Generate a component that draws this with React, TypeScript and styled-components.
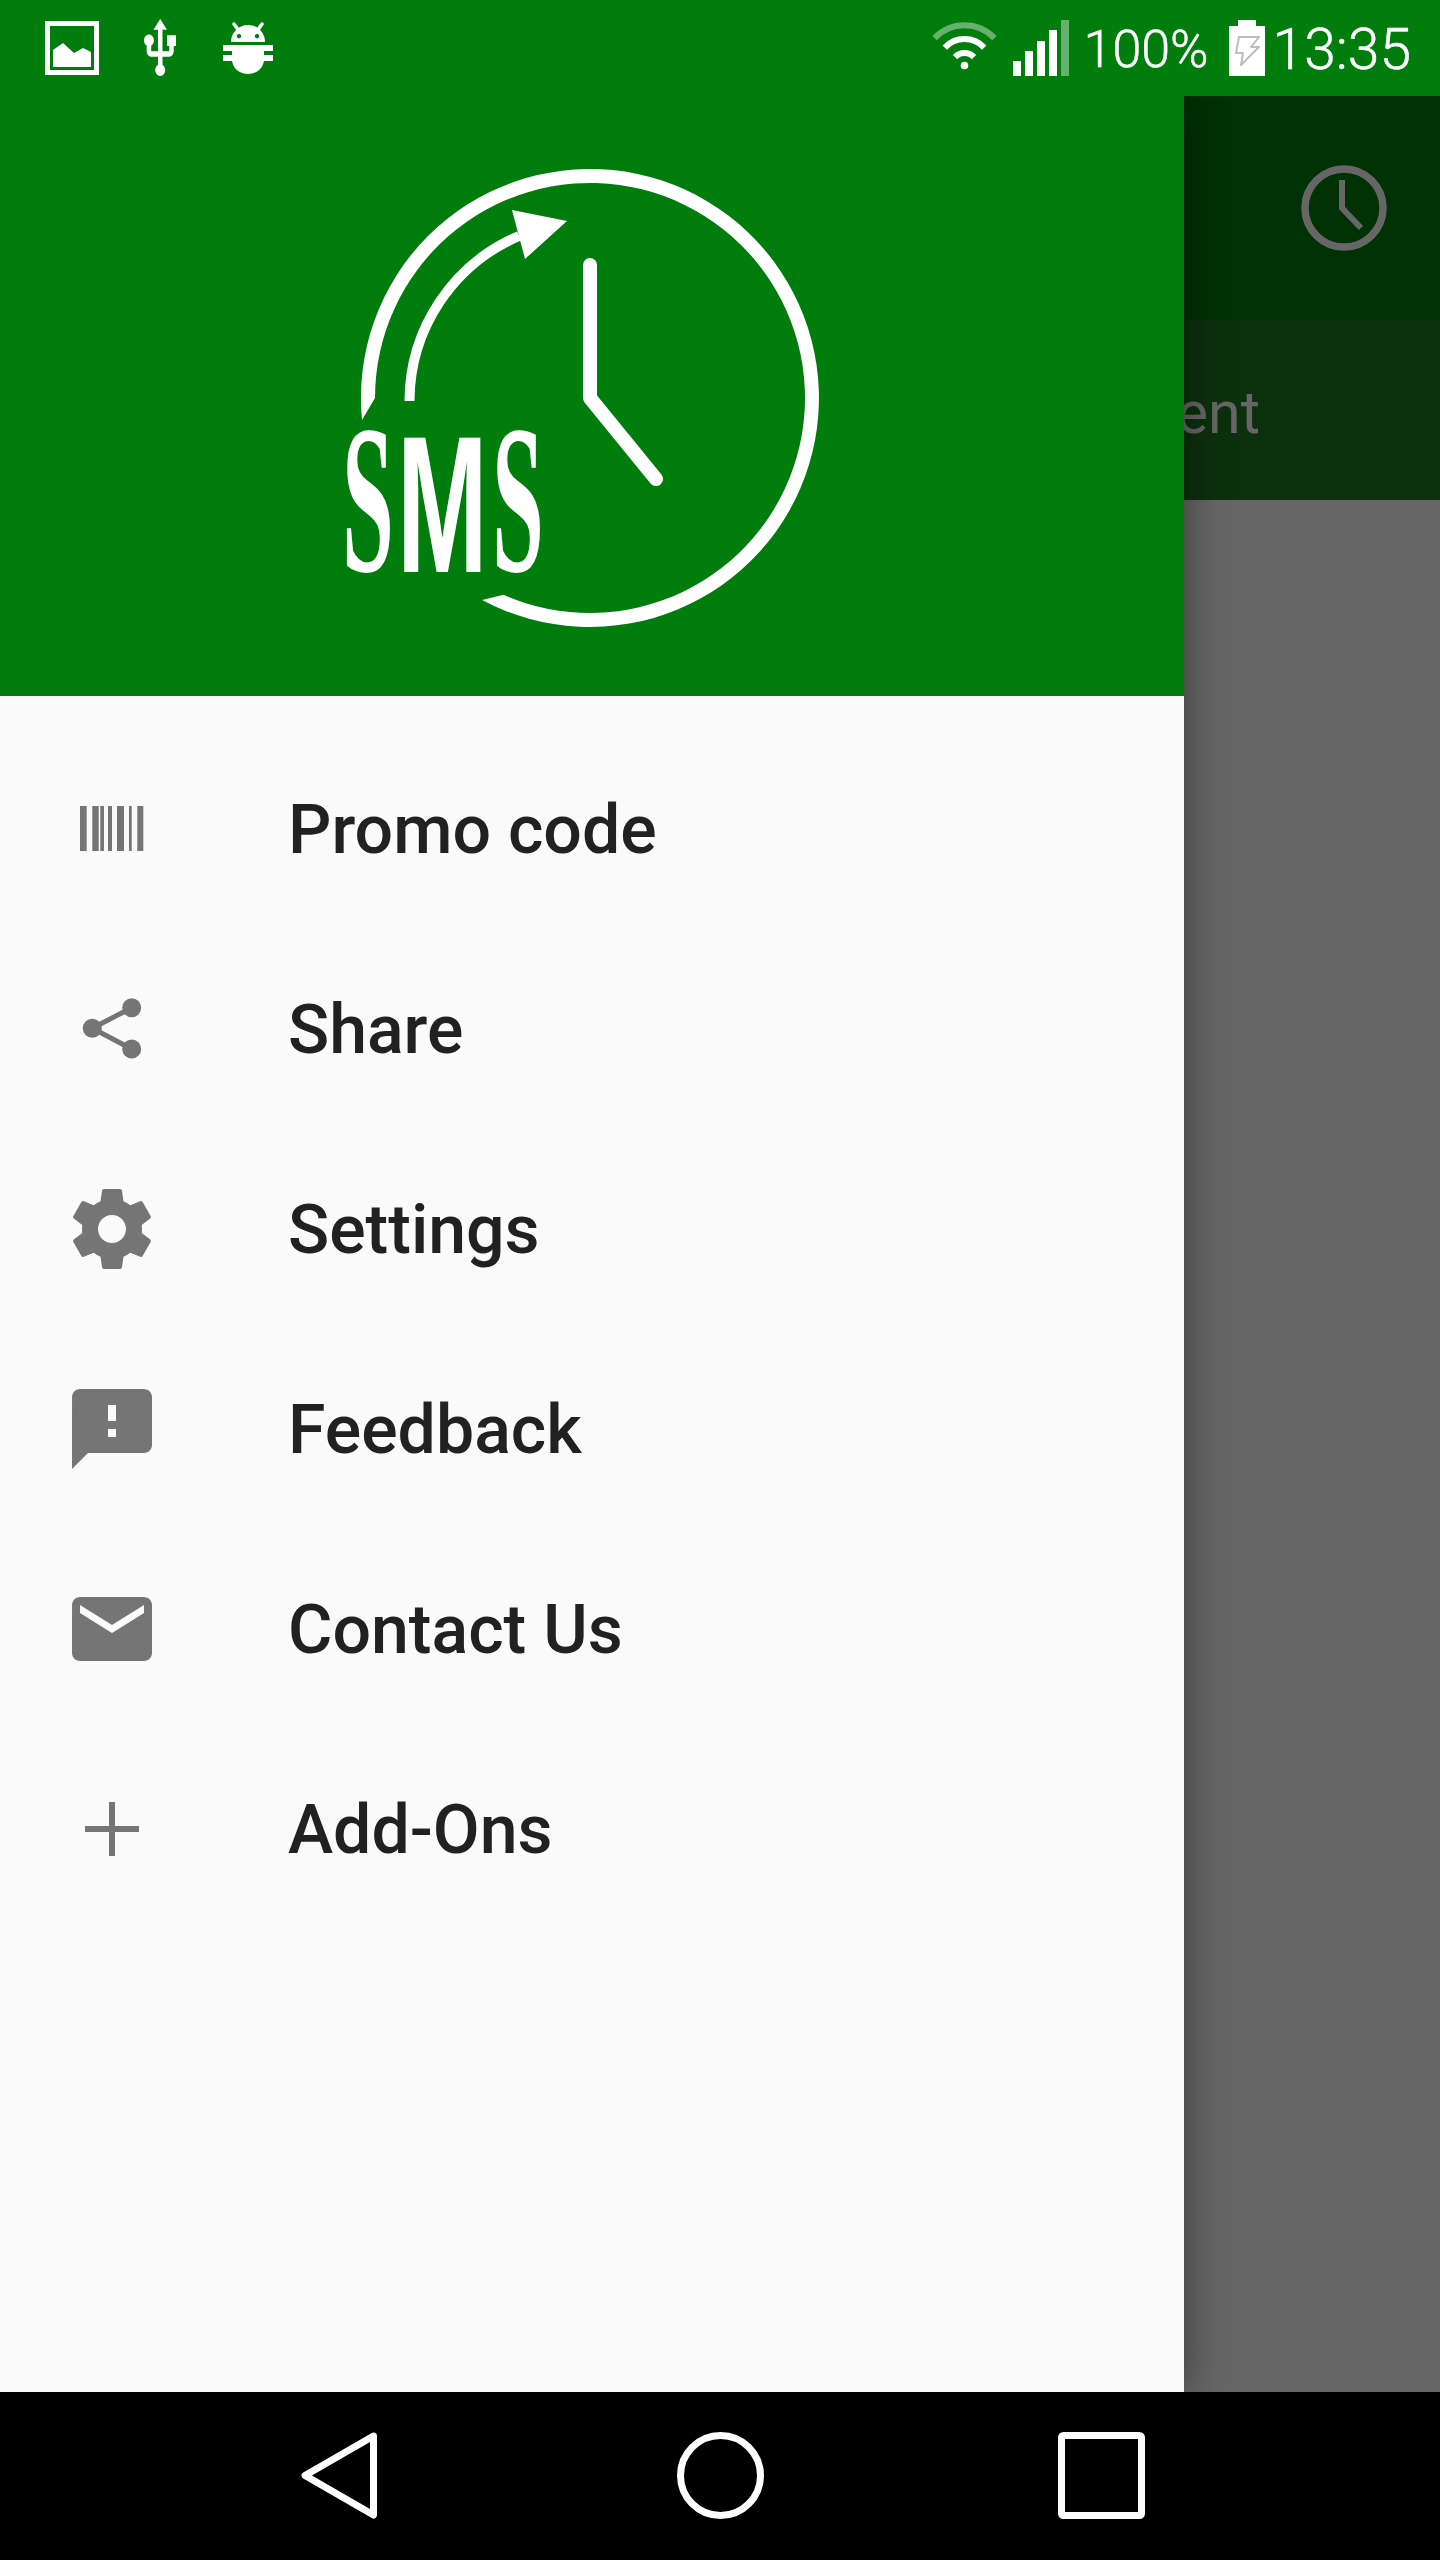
import React from 'react';
import styled, { createGlobalStyle } from 'styled-components';

const GlobalStyle = createGlobalStyle`
  html, body {
    margin: 0;
    padding: 0;
    background: #000;
  }
  * {
    box-sizing: border-box;
  }
`;

const Screen = styled.div`
  width: 1440px;
  height: 2560px;
  display: flex;
  flex-direction: column;
  overflow: hidden;
  font-family: Roboto, 'Liberation Sans', sans-serif;
`;

const StatusBar = styled.div`
  height: 96px;
  flex: none;
  position: relative;
  z-index: 2;
  display: flex;
  align-items: flex-start;
  justify-content: space-between;
  background: #017d0d;
  color: #fff;
`;

const StatusLeft = styled.div`
  display: flex;
  gap: 45px;
  padding: 19px 0 0 45px;
`;

const StatusRight = styled.div`
  display: flex;
  padding: 20px 29px 0 0;
`;

const StatusText = styled.span<{ $size: number; $gap: number }>`
  font-size: ${(p) => p.$size}px;
  font-weight: 300;
  line-height: 60px;
  margin: 0 ${(p) => p.$gap}px 0 0;
  white-space: nowrap;
  -webkit-text-stroke: 0.5px #fff;
`;

const StatusIcon = styled.svg<{ $top?: number; $gap?: number }>`
  display: block;
  flex: none;
  margin-top: ${(p) => p.$top ?? 0}px;
  margin-right: ${(p) => p.$gap ?? 0}px;
`;

const Body = styled.div`
  flex: 1;
  min-height: 0;
  position: relative;
  display: flex;
  flex-direction: column;
  background: #fff;
`;

const AppBar = styled.div`
  height: 224px;
  flex: none;
  display: flex;
  align-items: center;
  justify-content: flex-end;
  padding-right: 53px;
  background: #007d0e;
`;

const TabBar = styled.div`
  height: 180px;
  flex: none;
  display: flex;
  align-items: center;
  justify-content: flex-end;
  padding: 4px 180px 0 0;
  background: #1e781e;
  color: #fff;
  font-size: 59px;
`;

const Scrim = styled.div`
  position: absolute;
  inset: 0;
  background: rgba(0, 0, 0, 0.6);
`;

const Drawer = styled.nav`
  position: absolute;
  top: 0;
  left: 0;
  bottom: 0;
  width: 1184px;
  display: flex;
  flex-direction: column;
  background: #fafafa;
  box-shadow: 0 0 40px rgba(0, 0, 0, 0.45);
`;

const DrawerHeader = styled.div`
  height: 600px;
  flex: none;
  padding: 64px 0 0 340px;
  background: #017d0d;
`;

const LogoText = styled.text<{ $serif?: boolean }>`
  font-family: ${(p) => (p.$serif ? "'Liberation Serif'" : "'Liberation Sans'")}, sans-serif;
  font-weight: 700;
  font-size: ${(p) => (p.$serif ? 212 : 194)}px;
  fill: #fff;
`;

const MenuList = styled.ul`
  list-style: none;
  margin: 0;
  padding: 33px 0 0;
  display: flex;
  flex-direction: column;
`;

const MenuRow = styled.li`
  height: 200px;
  display: flex;
  align-items: center;
  gap: 128px;
  padding-left: 64px;
`;

const MenuLabel = styled.span`
  font-size: 68px;
  font-weight: 500;
  color: #212121;
  white-space: nowrap;
  padding-top: 2px;
`;

const MenuIcon = styled.svg`
  width: 96px;
  height: 96px;
  flex: none;
  display: block;
  color: #757575;
`;

const NavBar = styled.div`
  height: 168px;
  flex: none;
  display: grid;
  grid-template-columns: 301px 77px 299px 87px 294px 87px;
  align-items: start;
  padding-top: 40px;
  background: #000;
`;

const NavIcon = styled.svg<{ $col: number }>`
  display: block;
  grid-column: ${(p) => p.$col};
`;

const arcPath = (r: number) => {
  const s = 0.73 * r;
  const c = 0.68 * r;
  return `M${966.5 - s} ${66 - c}A${r} ${r} 0 0 1 ${966.5 + s} ${66 - c}`;
};

const ImageGlyph = () => (
  <StatusIcon width={54} height={54} viewBox="0 0 54 54" $top={2}>
    <rect x="2.5" y="2.5" width="49" height="49" fill="none" stroke="#fff" strokeWidth="5" />
    <path d="M8 29L18 22l11 10 9-5 8 4v15H8z" fill="#fff" />
  </StatusIcon>
);

const UsbGlyph = () => (
  <StatusIcon width={32} height={57} viewBox="4.8 1 14.2 21.2" preserveAspectRatio="none" $gap={2}>
    <path
      fill="#fff"
      d="M15 7v4h1v2h-3V5h2l-3-4-3 4h2v8H8v-2.07c.7-.37 1.2-1.08 1.2-1.93 0-1.21-.99-2.2-2.2-2.2-1.21 0-2.2.99-2.2 2.2 0 .85.5 1.56 1.2 1.93V13c0 1.11.89 2 2 2h3v3.05c-.71.37-1.2 1.1-1.2 1.95 0 1.22.99 2.2 2.2 2.2 1.21 0 2.2-.98 2.2-2.2 0-.85-.49-1.58-1.2-1.95V15h3c1.11 0 2-.89 2-2v-2h1V7h-4z"
    />
  </StatusIcon>
);

const BugGlyph = () => (
  <StatusIcon width={50} height={53} viewBox="223 22 50 53" $top={3}>
    <path d="M234 24l5 7M262 24l-5 7" fill="none" stroke="#fff" strokeWidth="3.500" strokeLinecap="round" />
    <path
      fill="#fff"
      fillRule="evenodd"
      d="M231 42c0-9 7-17 17-17s17 8 17 17zM239 34a2.200 2.200 0 1 0 .01 0zM257 34a2.200 2.200 0 1 0 .01 0z"
    />
    <path
      fill="#fff"
      d="M223 45h50v6h-9v4h9v6h-9c-1.500 8-8 13-16 13s-14.500-5-16-13h-9v-6h9v-4h-9z"
    />
  </StatusIcon>
);

const WifiGlyph = () => (
  <StatusIcon width={68} height={50} viewBox="933 22 68 50" $top={2} $gap={14}>
    <g fill="none" stroke="#fff" strokeWidth="6">
      <path d={arcPath(41)} opacity="0.4" />
      <path d={arcPath(27)} />
      <path d={arcPath(13)} />
    </g>
    <circle cx="966.5" cy="65.500" r="3.800" fill="#fff" />
  </StatusIcon>
);

const SignalGlyph = () => (
  <StatusIcon width={56} height={56} viewBox="1014 20 56 56" $gap={15}>
    <rect x="1014" y="61" width="8" height="15" fill="#fff" />
    <rect x="1026" y="51" width="8" height="25" fill="#fff" />
    <rect x="1038" y="41" width="8" height="35" fill="#fff" />
    <rect x="1050" y="30" width="8" height="46" fill="#fff" />
    <rect x="1062" y="20" width="8" height="56" fill="#fff" opacity="0.4" />
  </StatusIcon>
);

const BatteryGlyph = () => (
  <StatusIcon width={36} height={56} viewBox="1229 20 36 56" $gap={8}>
    <path d="M1238 20h18v6h9v50h-36V26h9z" fill="#fff" />
    <path
      d="M1239 37h20l-8 10h8l-18 18 2-12h-7z"
      fill="none"
      stroke="#bdbdbd"
      strokeWidth="2"
      strokeLinejoin="round"
    />
  </StatusIcon>
);

const ClockGlyph = () => (
  <svg width={86} height={86} viewBox="1301 165 86 86" style={{ display: 'block' }}>
    <circle cx="1344" cy="208" r="39" fill="none" stroke="#fff" strokeWidth="7.500" />
    <path d="M1342 180v28l19 20" fill="none" stroke="#fff" strokeWidth="6" />
  </svg>
);

const Logo = () => (
  <svg width={490} height={476} viewBox="340 160 490 476" style={{ display: 'block' }}>
    <path
      fill="#fff"
      d="M362 420A229 229 0 1 1 482.100 600L503.500 594.800A215 215 0 1 0 375 398Z"
    />
    <path d="M409.500 401A180 180 0 0 1 519 236" fill="none" stroke="#fff" strokeWidth="10" />
    <path d="M512 210L567 221 525 259Z" fill="#fff" />
    <path
      d="M590 265V398L656 479"
      fill="none"
      stroke="#fff"
      strokeWidth="14"
      strokeLinecap="round"
      strokeLinejoin="round"
    />
    <LogoText $serif transform="translate(342 571) scale(0.44 1)">
      S
    </LogoText>
    <LogoText transform="translate(397 572) scale(0.56 1)">
      M
    </LogoText>
    <LogoText $serif transform="translate(492 571) scale(0.44 1)">
      S
    </LogoText>
  </svg>
);

const BARCODE_BARS = [
  [16, 6.7],
  [28.3, 6.4],
  [36.3, 3.7],
  [44, 4],
  [53, 7],
  [65, 2.7],
  [73.3, 6],
];

const menuItems: { label: string; icon: React.ReactNode }[] = [
  {
    label: 'Promo code',
    icon: (
      <MenuIcon viewBox="0 0 96 96">
        {BARCODE_BARS.map(([x, w]) => (
          <rect key={x} x={x} y="25" width={w} height="45" fill="currentColor" />
        ))}
      </MenuIcon>
    ),
  },
  {
    label: 'Share',
    icon: (
      <MenuIcon viewBox="0 0 96 96">
        <path d="M67.700 26.700L28.300 47.300 67.700 68" fill="none" stroke="currentColor" strokeWidth="5" />
        <circle cx="67.700" cy="26.700" r="9.500" fill="currentColor" />
        <circle cx="28.300" cy="47.300" r="9.500" fill="currentColor" />
        <circle cx="67.700" cy="68" r="9.500" fill="currentColor" />
      </MenuIcon>
    ),
  },
  {
    label: 'Settings',
    icon: (
      <MenuIcon viewBox="0 0 24 24">
        <path
          fill="currentColor"
          d="M19.43 12.98c.04-.32.07-.64.07-.98s-.03-.66-.07-.98l2.11-1.65c.19-.15.24-.42.12-.64l-2-3.46c-.12-.22-.39-.3-.61-.22l-2.49 1c-.52-.4-1.08-.73-1.69-.98l-.38-2.65C14.46 2.18 14.25 2 14 2h-4c-.25 0-.46.18-.49.42l-.38 2.65c-.61.25-1.17.59-1.69.98l-2.49-1c-.23-.09-.49 0-.61.22l-2 3.46c-.13.22-.07.49.12.64l2.11 1.65c-.04.32-.07.65-.07.98s.03.66.07.98l-2.11 1.65c-.19.15-.24.42-.12.64l2 3.46c.12.22.39.3.61.22l2.49-1c.52.4 1.08.73 1.69.98l.38 2.65c.03.24.24.42.49.42h4c.25 0 .46-.18.49-.42l.38-2.65c.61-.25 1.17-.59 1.69-.98l2.49 1c.23.09.49 0 .61-.22l2-3.46c.12-.22.07-.49-.12-.64l-2.11-1.65zM12 15.5c-1.93 0-3.5-1.57-3.5-3.5s1.57-3.5 3.5-3.5 3.5 1.57 3.5 3.5-1.57 3.5-3.5 3.5z"
        />
      </MenuIcon>
    ),
  },
  {
    label: 'Feedback',
    icon: (
      <MenuIcon viewBox="0 0 24 24">
        <path
          fill="currentColor"
          d="M20 2H4c-1.1 0-1.99.9-1.99 2L2 22l4-4h14c1.1 0 2-.9 2-2V4c0-1.1-.9-2-2-2zm-7 12h-2v-2h2v2zm0-4h-2V6h2v4z"
        />
      </MenuIcon>
    ),
  },
  {
    label: 'Contact Us',
    icon: (
      <MenuIcon viewBox="0 0 24 24">
        <path
          fill="currentColor"
          d="M20 4H4c-1.1 0-1.99.9-1.99 2L2 18c0 1.1.9 2 2 2h16c1.1 0 2-.9 2-2V6c0-1.1-.9-2-2-2zm0 4l-8 5-8-5V6l8 5 8-5v2z"
        />
      </MenuIcon>
    ),
  },
  {
    label: 'Add-Ons',
    icon: (
      <MenuIcon viewBox="0 0 96 96">
        <path d="M48 21v54M21 48h54" fill="none" stroke="currentColor" strokeWidth="6" />
      </MenuIcon>
    ),
  },
];

export default function App() {
  return (
    <Screen>
      <GlobalStyle />
      <StatusBar>
        <StatusLeft>
          <ImageGlyph />
          <UsbGlyph />
          <BugGlyph />
        </StatusLeft>
        <StatusRight>
          <WifiGlyph />
          <SignalGlyph />
          <StatusText $size={52} $gap={20}>100%</StatusText>
          <BatteryGlyph />
          <StatusText $size={57} $gap={0}>13:35</StatusText>
        </StatusRight>
      </StatusBar>
      <Body>
        <AppBar>
          <ClockGlyph />
        </AppBar>
        <TabBar>Recent</TabBar>
        <Scrim />
        <Drawer>
          <DrawerHeader>
            <Logo />
          </DrawerHeader>
          <MenuList>
            {menuItems.map((item) => (
              <MenuRow key={item.label}>
                {item.icon}
                <MenuLabel>{item.label}</MenuLabel>
              </MenuRow>
            ))}
          </MenuList>
        </Drawer>
      </Body>
      <NavBar>
        <NavIcon $col={2} width={77} height={87} viewBox="0 0 77 87">
          <path
            d="M72.500 4L4 43.500 72.500 83Z"
            fill="none"
            stroke="#fff"
            strokeWidth="7"
            strokeLinejoin="round"
          />
        </NavIcon>
        <NavIcon $col={4} width={87} height={87} viewBox="0 0 87 87">
          <circle cx="43.500" cy="43.500" r="40" fill="none" stroke="#fff" strokeWidth="7" />
        </NavIcon>
        <NavIcon $col={6} width={87} height={87} viewBox="0 0 87 87">
          <rect x="3.500" y="3.500" width="80" height="80" rx="2" fill="none" stroke="#fff" strokeWidth="7" />
        </NavIcon>
      </NavBar>
    </Screen>
  );
}
